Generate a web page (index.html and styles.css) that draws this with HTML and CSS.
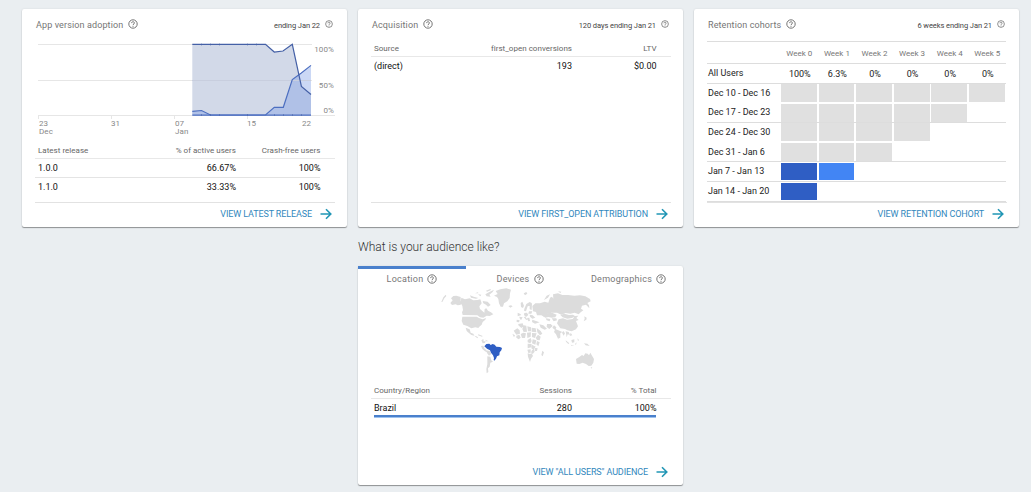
FILE: index.html
```html
<!DOCTYPE html>
<html lang="en">
<head>
<meta charset="utf-8">
<title>Analytics dashboard</title>
<link rel="stylesheet" href="styles.css">
</head>
<body>
<svg class="defs" width="0" height="0">
  <symbol id="help" viewBox="0 0 10 10"><circle cx="5" cy="5" r="4.2" fill="none" stroke="currentColor" stroke-width=".9"/><path d="M3.6 4.1C3.6 2.3 6.4 2.3 6.4 4 6.4 5 5 5.1 5 6.1M5 6.9V7.8" fill="none" stroke="currentColor" stroke-width=".9"/></symbol>
  <symbol id="arrow" viewBox="0 0 12 12"><path d="M.5 6H10.5M6 1.2 10.8 6 6 10.8" fill="none" stroke="currentColor" stroke-width="1.6"/></symbol>
</svg>
<main class="board">
  <section class="card">
    <header class="head"><h2 class="title">App version adoption</h2><svg class="help"><use href="#help"/></svg><span class="period">ending Jan 22</span><svg class="help small"><use href="#help"/></svg></header>
    <svg class="chart" viewBox="36 39 300 102">
      <path class="gridline" d="M38 44.5H312M38 80.5H312M38 115.5H335M38.5 115V119M111.5 115V119M174.5 115V119M247.5 115V119"/>
      <path class="area-a" d="M192.3 44.3H265.5L274.3 52 283 51 292.3 44.3 301.4 86.5 311 94.5V115.5H192.3Z"/>
      <path class="area-b" d="M192.3 111.3 201.5 110.5 210.5 115H265.5L274.3 107.3H283.3L292.3 79.5 301 73.2 311 65.4V115.5H192.3Z"/>
      <path class="gridline over" d="M192 80.5H311"/>
      <path class="line-b" d="M192.3 111.3 201.5 110.5 210.5 115H265.5L274.3 107.3H283.3L292.3 79.5 301 73.2 311 65.4"/>
      <path class="line-b" d="M192.3 115.2H311"/>
      <path class="ticks" d="M201.5 43.5v2M210.5 43.5v2M219.5 43.5v2M247.5 43.5v2M256.5 43.5v2M201.5 114v2M210.5 114v2M219.5 114v2M247.5 114v2M274.5 114v2M283.5 114v2M292.5 114v2M301.5 114v2"/>
      <path class="line-a" d="M192.3 44.4H265.5L274.3 52 283 51 292.3 44.3 301.4 86.5 311 94.5"/>
      <g class="axis">
        <text x="39" y="126.3">23</text><text x="39" y="134.3">Dec</text><text x="111" y="126.3">31</text>
        <text x="175" y="126.3">07</text><text x="175" y="134.3">Jan</text><text x="247" y="126.3">15</text><text x="302" y="126.3">22</text>
        <text class="end" x="334" y="52.3">100%</text><text class="end" x="334" y="88.3">50%</text><text class="end" x="334" y="113.3">0%</text>
      </g>
    </svg>
    <div class="table">
      <div class="row labels"><span>Latest release</span><span>% of active users</span><span>Crash-free users</span></div>
      <div class="row inner"><span>1.0.0</span><span>66.67%</span><span>100%</span></div>
      <div class="row"><span>1.1.0</span><span>33.33%</span><span>100%</span></div>
    </div>
    <a class="more"><span>VIEW LATEST RELEASE</span><svg class="arrow"><use href="#arrow"/></svg></a>
  </section>
  <section class="card">
    <header class="head"><h2 class="title">Acquisition</h2><svg class="help"><use href="#help"/></svg><span class="period">120 days ending Jan 21</span><svg class="help small"><use href="#help"/></svg></header>
    <div class="table">
      <div class="row labels"><span>Source</span><span>first_open conversions</span><span>LTV</span></div>
      <div class="row"><span>(direct)</span><span>193</span><span>$0.00</span></div>
    </div>
    <a class="more"><span>VIEW FIRST_OPEN ATTRIBUTION</span><svg class="arrow"><use href="#arrow"/></svg></a>
  </section>
  <section class="card">
    <header class="head"><h2 class="title">Retention cohorts</h2><svg class="help"><use href="#help"/></svg><span class="period">6 weeks ending Jan 21</span><svg class="help small"><use href="#help"/></svg></header>
    <div class="cohorts">
      <div class="weeks"><span></span><span>Week 0</span><span>Week 1</span><span>Week 2</span><span>Week 3</span><span>Week 4</span><span>Week 5</span></div>
      <div class="totals"><span>All Users</span><b>100%</b><b>6.3%</b><b>0%</b><b>0%</b><b>0%</b><b>0%</b></div>
      <div class="cohort"><span>Dec 10 - Dec 16</span><i></i><i></i><i></i><i></i><i></i><i></i></div>
      <div class="cohort ruled"><span>Dec 17 - Dec 23</span><i></i><i></i><i></i><i></i><i></i></div>
      <div class="cohort"><span>Dec 24 - Dec 30</span><i></i><i></i><i></i><i></i></div>
      <div class="cohort ruled"><span>Dec 31 - Jan 6</span><i></i><i></i><i></i></div>
      <div class="cohort ruled"><span>Jan 7 - Jan 13</span><i class="full"></i><i class="part"></i></div>
      <div class="cohort ruled"><span>Jan 14 - Jan 20</span><i class="full"></i></div>
    </div>
    <a class="more"><span>VIEW RETENTION COHORT</span><svg class="arrow"><use href="#arrow"/></svg></a>
  </section>
  <div class="audience">
    <h1 class="question">What is your audience like?</h1>
    <section class="card tall">
      <nav class="tabs">
        <span class="tab active">Location<svg class="help"><use href="#help"/></svg></span>
        <span class="tab">Devices<svg class="help"><use href="#help"/></svg></span>
        <span class="tab">Demographics<svg class="help"><use href="#help"/></svg></span>
      </nav>
      <svg class="map" viewBox="0 21 540 267">
        <g class="land">
          <path d="M34 66 40 52 47 44 49 48 43 55 37 66ZM61 69 68 61 63 55 70 48 79 47 92 51 92 63 97 72 89 75 83 76 77 73 66 75Z"/>
          <path d="M94 53 105 58 119 55 130 61 142 60 151 58 155 70 148 79 150 87 158 94 163 98 164 87 169 85 174 92 183 97 190 103 179 108 170 107 160 113 150 112 142 106 98 105 96 97 99 90 97 78 92 66Z"/>
          <path d="M158 63 173 65 182 75 174 80 168 74 160 70ZM120 46 131 50 145 54 138 56 123 53ZM144 43 154 44 151 49ZM166 43 178 36 192 29 188 36 178 44 182 50 170 49ZM168 32 181 27 183 30 171 35ZM135 40 144 37 145 40Z"/>
          <path d="M197 33 211 28 229 25 243 29 240 40 239 54 232 64 222 70 219 80 212 80 207 70 205 57 201 51 192 47 203 42Z"/>
          <path d="M97 110 140 110 147 114 158 118 168 114 166 119 158 126 155 134 148 140 145 144 136 142 124 145 112 138 100 134 95 123Z"/>
          <path d="M107 143 119 148 122 158 130 161 133 167 124 165 114 157 110 153ZM133 167 139 169 144 172 142 175ZM145 163 158 168 156 170 144 166Z"/>
          <path d="M154 181 160 177 161 184 167 184 165 189 158 190ZM166 179 176 184 168 184ZM153 198 160 197 163 205 168 209 171 217 165 214 157 207ZM169 211 179 213 184 222 177 227 171 219ZM172 229 181 230 184 241 189 245 181 248 179 260 174 265 175 276 170 280 169 267 172 253Z"/>
          <path d="M307 78 316 70 330 70 344 65 355 68 360 53 366 50 370 56 369 43 384 40 397 45 414 45 433 47 450 46 466 49 480 57 482 64 472 69 477 76 478 85 468 74 456 77 453 86 460 91 452 97 446 103 434 98 421 101 407 99 394 104 381 98 364 98 350 102 343 111 334 106 321 106 318 96 309 94Z"/>
          <path d="M343 102 356 99 366 98 380 104 376 112 365 113 355 111 346 113 339 108ZM391 105 403 101 417 105 429 104 436 109 426 114 412 116 398 112ZM386 118 399 115 411 119 428 117 435 108 445 107 439 114 446 120 438 123 444 139 438 148 425 154 412 151 405 147 391 145 381 130Z"/>
          <path d="M365 115 379 115 381 121 371 124ZM347 115 361 117 359 124 350 121ZM328 133 340 136 351 146 344 149 332 143ZM351 132 362 132 368 138 358 147 350 141ZM372 136 379 142 376 151 367 143ZM376 147 385 151 397 156 391 160 391 173 384 176 378 163 372 156ZM400 153 405 160 401 167 396 158ZM407 154 416 156 420 165 413 163 410 172ZM422 158 427 166 419 168ZM307 119 318 123 329 127 315 131 306 126ZM463 109 470 113 469 119 461 124 464 116Z"/>
          <path d="M272 69 277 65 282 77 279 84 273 81ZM283 86 289 72 299 66 305 69 300 77 293 79 288 94 282 92ZM299 74 306 70 305 90 299 88ZM263 98 270 101 274 105 263 109ZM283 99 291 98 295 105 288 111 282 105ZM297 94 307 94 304 101 295 101ZM299 104 308 106 316 113 307 116 300 110ZM268 110 278 112 273 121 269 115ZM260 119 269 121 267 127 260 126ZM281 111 286 110 293 120 288 119ZM291 114 298 113 300 123 295 124Z"/>
          <path d="M265 132 278 130 281 139 274 144 265 136ZM281 136 289 137 291 155 281 156 277 147ZM292 139 303 142 303 154 294 154ZM305 143 317 145 319 157 305 155ZM320 144 332 153 337 161 330 166 322 157ZM251 152 262 145 269 151 270 161 259 164ZM247 161 255 166 252 172ZM259 167 268 164 272 173 266 178 259 173ZM272 162 280 158 288 160 285 174 276 174ZM291 158 303 157 302 170 292 174ZM306 159 320 160 315 174 306 171ZM324 164 332 170 329 181 321 180 317 173Z"/>
          <path d="M293 180 302 174 305 183 301 190 293 187ZM308 178 319 181 316 194 306 190ZM321 183 329 187 325 199 319 193ZM293 191 305 192 304 202 293 205ZM306 194 317 200 310 209 304 205ZM292 209 302 208 302 218 295 219ZM306 211 312 206 314 215 308 222 303 217ZM314 203 323 205 321 213 315 213ZM293 220 300 222 305 220 309 228 303 236 300 246 294 230ZM337 212 342 217 338 229 334 225Z"/>
          <path d="M438 237 448 231 456 225 461 228 466 220 473 221 477 226 481 218 487 229 492 237 490 248 484 257 476 258 468 252 458 248 448 252 440 251ZM482 262 487 262 484 266Z"/>
          <path d="M407 181 418 190 415 192 408 185ZM424 180 433 178 433 187 426 188ZM435 192 440 187 438 195ZM462 190 472 191 479 198 467 196ZM442 175 447 180 444 183ZM422 194 433 197 424 197ZM235 78 243 76 248 79 241 83ZM281 40 289 36 292 41 285 46ZM342 60 350 47 360 43 354 53ZM384 34 394 35 391 39Z"/>
        </g>
        <path class="brazil" d="M163 199 169 192 178 191 182 195 188 192 194 194 199 200 210 201 216 204 214 211 209 217 208 226 201 229 198 236 193 242 191 240 192 234 189 226 183 218 180 211 171 206Z"/>
      </svg>
      <div class="table">
        <div class="row labels"><span>Country/Region</span><span>Sessions</span><span>% Total</span></div>
        <div class="row selected"><span>Brazil</span><span>280</span><span>100%</span></div>
      </div>
      <a class="more plain"><span>VIEW "ALL USERS" AUDIENCE</span><svg class="arrow"><use href="#arrow"/></svg></a>
    </section>
  </div>
</main>
</body>
</html>
```
FILE: styles.css
```css
* { box-sizing: border-box; }
body { margin: 0; height: 492px; overflow: hidden; background: #eaeef1; font-family: Roboto, "Liberation Sans", sans-serif; font-size: 9px; color: #222; white-space: nowrap; }
.defs { display: block; }
.board { display: grid; grid-template-columns: repeat(3, 325px); column-gap: 11px; padding: 9px 0 0 22px; }
.card { height: 218px; display: flex; flex-direction: column; background: #fff; border-radius: 2px; box-shadow: 0 1px 1px rgba(0,0,0,.38), 0 0 2px rgba(0,0,0,.1); }
.head { height: 30px; flex: none; display: flex; align-items: center; padding: 0 14px; color: #757575; }
.title { margin: 0; font-size: 9px; font-weight: 400; letter-spacing: .12px; padding-top: 1px; }
.help { width: 10px; height: 10px; margin-left: 5px; color: #666; flex: none; }
.small { width: 8px; height: 8px; margin-left: 5px; }
.period { margin-left: auto; font-size: 7.5px; letter-spacing: -.08px; color: #444; padding-top: 2px; }
.chart { display: block; width: 300px; height: 102px; margin-left: 14px; flex: none; }
.gridline { stroke: #e6e6e6; fill: none; }
.over { stroke: #c8cede; }
.area-a { fill: #d2d9e8; }
.area-b { fill: #7c9ee6; fill-opacity: .4; }
.line-a, .line-b { fill: none; stroke: #4460a6; stroke-width: 1.2; }
.line-b { stroke: #4d6fc0; }
.ticks { stroke: #4460a6; stroke-width: .5; }
.axis { font-size: 8px; fill: #888; letter-spacing: .1px; }
.end { text-anchor: end; }
.table { flex: none; padding: 0 12px 0 13px; }
.row { height: 19px; display: grid; grid-template-columns: 98px 100px 84.5px; padding: 0 0 2px 3px; align-items: center; color: #111; }
.row span + span { text-align: right; }
.row.labels { height: 18px; padding-top: 1px; padding-bottom: 0; border-bottom: 1px solid #e8e8e8; color: #666; font-size: 8px; letter-spacing: .02px; }
.inner { border-bottom: 1px solid #e4e4e4; width: 285px; padding-bottom: 1px; }
.more { margin: auto 12px 0 13px; height: 25px; flex: none; border-top: 1px solid #e2e2e2; display: flex; align-items: center; justify-content: flex-end; padding: 0 3px 2px 0; letter-spacing: -.12px; color: #3288bd; }
.arrow { width: 12px; height: 12px; margin-left: 8px; color: #2196b5; }
.plain { border-color: transparent; }
.cohorts { margin: 2px 13px 0; border-top: 1px solid #ddd; flex: none; }
.weeks, .totals, .cohort { display: grid; grid-template-columns: 74px repeat(6, 37.6px); align-items: center; width: 299px; }
.weeks { height: 22px; padding-top: 1px; font-size: 8px; color: #777; }
.weeks span { text-align: center; padding-right: 1px; }
.totals { height: 20px; }
.weeks, .totals { border-bottom: 1px solid #ddd; }
.totals b { font-weight: 400; text-align: center; }
.cohort { height: 19.6px; }
.totals span, .cohort span { padding: 0 0 1px 1px; }
.cohort i { height: 18px; width: 35.8px; background: #e0e0e0; align-self: start; }
.ruled { border-bottom: 1px solid #ddd; }
.cohort .full { background: #2f5ec4; height: 17px; align-self: center; }
.cohort .part { background: #4285f4; height: 17px; align-self: center; }
.audience { grid-column: 2; }
.question { margin: 0; height: 39px; line-height: 40px; font-size: 12px; font-weight: 300; color: #333; }
.tall { height: 219px; }
.tabs { height: 22px; flex: none; display: grid; grid-template-columns: 108px 108px 109px; }
.tab { display: flex; align-items: center; justify-content: center; color: #777; letter-spacing: .25px; padding-top: 1px; border-top: 3px solid transparent; }
.tab .help { margin-left: 4px; }
.active { border-color: #4a80cc; }
.map { width: 180px; height: 89px; margin: -1px 0 0 72px; flex: none; }
.land { fill: #dcdcdc; }
.brazil { fill: #2f5ec4; }
.tall .table { padding-top: 5px; }
.selected { width: 285px; position: relative; }
.selected::after { content: ""; position: absolute; left: 3px; right: 0; bottom: 0; height: 2px; background: #4a80cc; border-bottom: 1px solid #9fc3ef; }
```
